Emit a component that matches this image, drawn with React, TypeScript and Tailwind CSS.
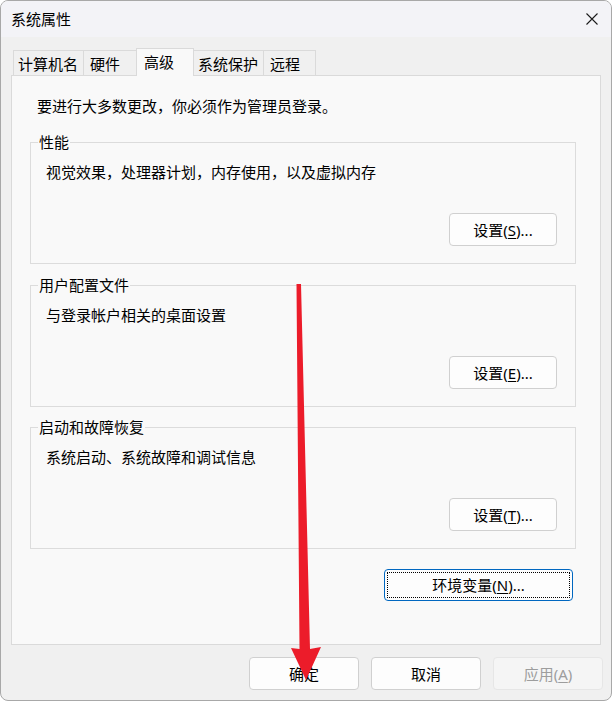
import React from 'react';

const font = { fontFamily: '"Noto Sans", "Noto Sans CJK SC", sans-serif' };

const tabs = [
  { label: '计算机名', w: 'w-[71px]', pl: 'pl-[4px]' },
  { label: '硬件', w: 'w-[54px]', pl: 'pl-[6px]' },
  { label: '高级', w: 'w-[58px]', pl: 'pl-[7px]', active: true },
  { label: '系统保护', w: 'w-[71px]', pl: 'pl-[4px]' },
  { label: '远程', w: 'w-[53px]', pl: 'pl-[6px]' },
];

const groups = [
  { title: '性能', text: '视觉效果，处理器计划，内存使用，以及虚拟内存', key: 'S', mt: 'mt-[26px]' },
  { title: '用户配置文件', text: '与登录帐户相关的桌面设置', key: 'E', mt: 'mt-[21px]' },
  { title: '启动和故障恢复', text: '系统启动、系统故障和调试信息', key: 'T', mt: 'mt-[20px]' },
];

const Button: React.FC<{ children: React.ReactNode; className?: string; disabled?: boolean }> = ({
  children,
  className = '',
  disabled,
}) => (
  <div
    className={`flex items-center justify-center rounded-[4px] border text-[15px] leading-[20px] ${
      disabled
        ? 'border-[#e6e6e6] bg-[#f5f5f5] text-[#9d9d9d]'
        : 'border-[#d0d0d0] bg-[#fdfdfd] text-black'
    } ${className}`}
  >
    {children}
  </div>
);

const App: React.FC = () => {
  return (
    <div className="h-[702px] w-[613px] bg-white" style={font}>
      <div className="relative flex h-[701px] w-[612px] flex-col overflow-hidden rounded-[8px] border border-[#a8a8a8] bg-[#f0f0f0]">
        {/* title bar */}
        <div className="flex h-[36px] items-center justify-between bg-[#f3f3f7] pl-[10px] pr-[13px]">
          <span className="text-[15px] leading-[20px] text-black">系统属性</span>
          <svg width="12" height="12" viewBox="0 0 12 12">
            <path d="M0.5 0.5 L11.5 11.5 M11.5 0.5 L0.5 11.5" stroke="#1b1b1b" strokeWidth="1.1" />
          </svg>
        </div>

        <div className="mt-[11px] pl-[10px]">
          {/* tabs */}
          <div className="flex h-[27px] items-end pl-[2px]">
            {tabs.map((t, i) => (
              <div
                key={t.label}
                className={`${t.w} ${t.pl} ${i > 0 ? '-ml-px' : ''} border border-b-0 border-[#dadada] text-[15px] text-black ${
                  t.active
                    ? 'relative z-10 -mb-px h-[28px] bg-[#f9f9f9] pt-[2px] leading-[22px]'
                    : 'h-[25px] bg-[#f0f0f0] pt-[2px] leading-[23px]'
                }`}
              >
                {t.label}
              </div>
            ))}
          </div>

          {/* panel */}
          <div className="flex h-[570px] w-[590px] flex-col border border-[#dadada] bg-[#f9f9f9] pl-[18px] pt-[20px]">
            <p className="ml-[7px] text-[15px] leading-[20px] text-black">要进行大多数更改，你必须作为管理员登录。</p>

            {groups.map((g) => (
              <div
                key={g.title}
                className={`${g.mt} relative flex h-[122px] w-[546px] flex-col border border-[#dcdcdc] pl-[15px] pt-[19px]`}
              >
                <span className="absolute -top-[9px] left-[7px] bg-[#f9f9f9] px-[1px] text-[15px] leading-[16px] text-black">
                  {g.title}
                </span>
                <p className="text-[15px] leading-[20px] text-black">{g.text}</p>
                <Button className="mr-[18px] mt-[31px] h-[33px] w-[108px] self-end">
                  设置(<span className="underline underline-offset-2">{g.key}</span>)...
                </Button>
              </div>
            ))}

            <div className="mr-[27px] mt-[20px] flex h-[32px] w-[189px] self-end rounded-[4px] border border-[#0067c0] bg-[#fdfdfd] p-[2px]">
              <div className="flex flex-1 items-center justify-center border border-dotted border-black text-[15px] leading-[20px] text-black">
                环境变量(<span className="underline underline-offset-2">N</span>)...
              </div>
            </div>
          </div>
        </div>

        {/* bottom buttons */}
        <div className="mt-[12px] flex justify-end gap-[12px] pr-[8px]">
          <Button className="h-[33px] w-[110px]">确定</Button>
          <Button className="h-[33px] w-[110px]">取消</Button>
          <Button className="h-[33px] w-[110px]" disabled>
            应用(<span className="underline underline-offset-2">A</span>)
          </Button>
        </div>

        {/* red annotation arrow */}
        <svg className="pointer-events-none absolute -left-px -top-px" width="613" height="702" viewBox="0 0 613 702">
          <polygon
            points="296.5,284 301,284 310,649 321,647 306,680 291,648 299.5,649"
            fill="#ec1c2a"
          />
        </svg>
      </div>
    </div>
  );
};

export default App;
